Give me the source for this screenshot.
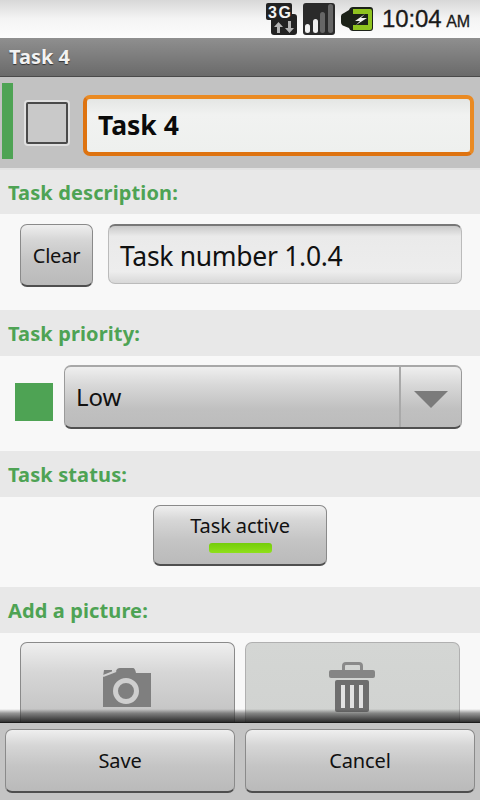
<div class="screen">
  <header class="status">
    <svg width="32" height="32" viewBox="0 0 32 32">
      <rect x="6" y="11" width="26" height="21" rx="3" fill="#222"/>
      <rect x="1" y="0" width="26" height="17" rx="2" fill="#222"/>
      <text x="3" y="14.500" class="g3">3G</text>
      <path d="M12 30v-6h-3l4.500-5 4.500 5h-3v6z" fill="#b4b4b4"/>
      <path d="M23 18v7h-3l4.500 5 4.500-5h-3v-7z" fill="#b4b4b4"/>
    </svg>
    <svg width="32" height="32" viewBox="0 0 32 32">
      <rect width="32" height="32" rx="3" fill="#2a2a2a"/>
      <rect x="2" y="21" width="5" height="9" rx="2.500" fill="#f2f2f2"/>
      <rect x="10" y="16" width="5" height="14" rx="2.500" fill="#eee"/>
      <rect x="17" y="9" width="5" height="21" rx="2.500" fill="#666"/>
      <rect x="25" y="1" width="5" height="29" rx="2.500" fill="#666"/>
    </svg>
    <svg class="batt" width="32" height="24" viewBox="0 0 32 24">
      <path d="M0 9 Q0 7 3 6 L8 3 Q9 0 12 0 H29 Q32 0 32 3 V21 Q32 24 29 24 H12 Q9 24 8 21 L3 19 Q0 18 0 15z" fill="#1c2218"/>
      <path d="M12 2 H29 Q31 2 31 4 V21 Q31 23 29 23 H12 V18 H27 V7 H12z" fill="#8fc31f"/>
      <path d="M24 7 L14 14 H19 L15 18 L26 11 H20z" fill="#f4f4f4"/>
    </svg>
    <span class="clock">10:04 <small>AM</small></span>
  </header>

  <div class="title">Task 4</div>

  <div class="taskhead">
    <div class="stripe"></div>
    <div class="check"></div>
    <div class="nameinput">Task 4</div>
  </div>

  <main class="content">
    <h2 class="label first">Task description:</h2>
    <section class="row desc">
      <button class="btn clear">Clear</button>
      <div class="descinput">Task number 1.0.4</div>
    </section>

    <h2 class="label">Task priority:</h2>
    <section class="row prio">
      <div class="swatch"></div>
      <div class="spinner">
        <span class="spintext">Low</span>
        <span class="spinarrow"><i></i></span>
      </div>
    </section>

    <h2 class="label">Task status:</h2>
    <section class="row status-row">
      <button class="btn toggle">
        <span>Task active</span>
        <i class="led"></i>
      </button>
    </section>

    <h2 class="label">Add a picture:</h2>
    <section class="row pics">
      <button class="btn pic" aria-label="Take picture">
        <svg width="48" height="42" viewBox="0 0 48 42">
          <path d="M0 11 L1 4 H9 V6 H12 L13 5 Q14 2 17 2 H30 Q32 2 33 7 H48 V41 H0z" fill="#7f7f7f"/>
          <path d="M0 10 L13 5" stroke="#d2d2d2" stroke-width="2" fill="none"/>
          <circle cx="23" cy="25" r="10.500" fill="none" stroke="#cfcfcf" stroke-width="5"/>
        </svg>
      </button>
      <button class="btn pic disabled" aria-label="Delete picture">
        <svg width="46" height="51" viewBox="0 0 46 51">
          <path d="M14.500 9 V4 Q14.500 1.500 17 1.500 H30 Q32.500 1.500 32.500 4 V9" fill="none" stroke="#8a8a8a" stroke-width="3"/>
          <rect x="0" y="8" width="46" height="8" rx="2" fill="#858585"/>
          <rect x="6" y="18" width="34" height="32" rx="2" fill="#6e6e6e"/>
          <rect x="12" y="23" width="4" height="23" fill="#e2e2e2"/>
          <rect x="21" y="23" width="4" height="23" fill="#e2e2e2"/>
          <rect x="30" y="23" width="4" height="23" fill="#e2e2e2"/>
        </svg>
      </button>
    </section>
  </main>

  <footer class="actions">
    <div class="fade"></div>
    <button class="btn action">Save</button>
    <button class="btn action">Cancel</button>
  </footer>
</div>

<style>
  :global(body) { margin: 0; }
  .screen {
    width: 480px; height: 800px; overflow: hidden; position: relative;
    display: flex; flex-direction: column;
    font-family: "Noto Sans", "Open Sans", "DejaVu Sans", sans-serif;
    background: #f8f8f8; color: #111;
  }
  .status {
    height: 38px; flex: none; box-sizing: border-box;
    display: flex; align-items: center; justify-content: flex-end; gap: 6px;
    padding-right: 10px;
    background: linear-gradient(#d8d8d8, #f4f4f4 50%, #fcfcfc);
  }
  .batt { margin-right: 3px; }
  .g3 { font: 800 16px "Liberation Sans", sans-serif; fill: #f4f4f4; letter-spacing: 1.5px; }
  .clock {
    font-size: 24px; font-family: "Liberation Sans", sans-serif; color: #1a1a1a;
    -webkit-text-stroke: 0.3px #1a1a1a; white-space: nowrap; word-spacing: -2px; letter-spacing: -0.1px;
  }
  .clock small { font-size: 16px; }

  .title {
    height: 39px; flex: none; box-sizing: border-box;
    padding: 0 0 2px 9px; display: flex; align-items: center;
    background: linear-gradient(#8f8f8f, #6a6a6a);
    border-bottom: 1px solid #4a4a4a;
    color: #f2f2f2; font-size: 20px; font-weight: 700;
    text-shadow: 0 1px 1px #333;
  }
  .taskhead {
    height: 91px; flex: none; box-sizing: border-box;
    display: flex; align-items: flex-start;
    padding: 0 6px 0 2px; background: #c2c2c2;
  }
  .stripe { width: 11px; height: 76px; margin-top: 6px; background: #4ea354; flex: none; }
  .check {
    width: 42px; height: 42px; margin: 25px 0 0 13px; flex: none; box-sizing: border-box;
    border: 2px solid #4a4a4a; border-radius: 2px; background: #c9c9c9;
    box-shadow: 0 0 0 2px #e0e0e0;
  }
  .nameinput {
    flex: 1; height: 61px; margin: 18px 0 0 15px; box-sizing: border-box;
    border: 4px solid #ea8a22; border-bottom-color: #de7310; border-left-color: #de7310; border-radius: 7px;
    background: linear-gradient(#e4e6e4, #f1f2f1 30%, #eef0ee);
    display: flex; align-items: center; padding: 0 0 2px 11px;
    font-size: 26.500px; font-weight: 700; color: #0a0a0a;
  }
  .content { flex: 1; min-height: 0; overflow: hidden; }
  .label {
    margin: 0; height: 46px; box-sizing: border-box; background: #e8e8e8;
    color: #4ea354; font-size: 20px; font-weight: 700; letter-spacing: 0.12px;
    padding-left: 8px; display: flex; align-items: center;
  }
  .label.first { border-top: 2px solid #e2e2e2; }
  .row { display: flex; background: #f8f8f8; box-sizing: border-box; }
  .btn {
    font: inherit; color: #111; padding: 0; box-sizing: border-box;
    border: 1px solid #8a8a8a; border-bottom: 2px solid #4f4f4f; border-radius: 7px;
    background: linear-gradient(#efefef, #d6d6d6 25%, #c4c4c4 60%, #bababa);
  }
  .desc { height: 96px; padding: 10px 18px 0 20px; gap: 15px; align-items: flex-start; }
  .clear { width: 73px; height: 63px; font-size: 20px; padding-top: 1px; letter-spacing: -0.2px; }
  .descinput {
    flex: 1; height: 60px; box-sizing: border-box;
    border: 1px solid #bbb; border-top: 2px solid #777; border-radius: 7px;
    background: linear-gradient(#c9c9c9, #eaeaea 18%, #ededed 80%, #d8d8d8);
    display: flex; align-items: center; padding: 2px 0 0 11px;
    font-size: 26.500px; color: #111; letter-spacing: -0.3px;
  }
  .prio { height: 95px; padding: 9px 18px 0 15px; gap: 11px; align-items: flex-start; }
  .swatch { width: 38px; height: 38px; margin-top: 18px; background: #4ea354; flex: none; }
  .spinner {
    flex: 1; height: 64px; box-sizing: border-box; display: flex;
    border: 1px solid #9a9a9a; border-top: 2px solid #a8a8a8; border-bottom: 2px solid #505050; border-radius: 7px;
    background: linear-gradient(#efefef, #d8d8d8 30%, #c0c0c0 70%, #bcbcbc);
  }
  .spintext { flex: 1; display: flex; align-items: center; padding: 0 0 2px 11px; font-size: 24px; }
  .spinarrow {
    width: 62px; flex: none; box-sizing: border-box; border-left: 2px solid #a9a9a9;
    display: flex; align-items: center; justify-content: center;
  }
  .spinarrow i {
    width: 0; height: 0; display: block; margin: 5px 0 0 -1px;
    border-left: 17px solid transparent; border-right: 17px solid transparent;
    border-top: 17px solid #7b7b7b;
  }
  .status-row { height: 90px; justify-content: center; padding-top: 8px; }
  .toggle {
    width: 174px; height: 61px; display: flex; flex-direction: column; align-items: center;
    font-size: 20px; padding-top: 5px; line-height: 30px; letter-spacing: -0.1px;
  }
  .led {
    display: block; width: 63px; height: 10px; border-radius: 3px; margin-top: 2px;
    background: linear-gradient(#74cd0a, #8fe01a);
  }
  .pics { padding: 9px 20px 0; gap: 10px; }
  .pic {
    flex: 1; height: 120px; display: flex; justify-content: center; align-items: flex-start;
    padding: 23px 2px 0 0; border-bottom: none;
  }
  .pic.disabled {
    background: linear-gradient(#d4d6d4, #cfd1cf); border-color: #b0b0b0; padding-top: 19px;
  }
  .actions {
    position: relative; height: 78px; flex: none; box-sizing: border-box;
    display: flex; gap: 10px; padding: 6px 5px 7px 5px; background: #c4c4c4;
    border-top: 1px solid #1c1c1c;
  }
  .fade {
    position: absolute; left: 0; right: 0; bottom: 100%; height: 14px;
    background: linear-gradient(rgba(60,60,60,0), rgba(70,70,70,.55) 30%, rgba(25,25,25,.95));
  }
  .action { flex: 1; font-size: 20px; height: 64px; letter-spacing: -0.1px; }
</style>
